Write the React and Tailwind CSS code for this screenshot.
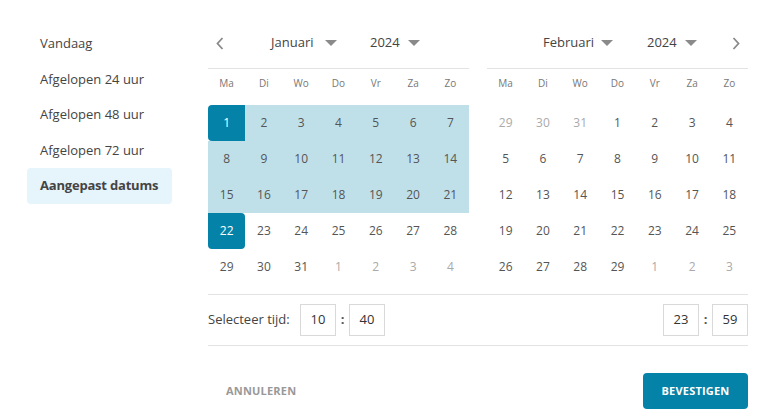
import { useState } from 'react';

const jan = [
  [1, 2, 3, 4, 5, 6, 7],
  [8, 9, 10, 11, 12, 13, 14],
  [15, 16, 17, 18, 19, 20, 21],
  [22, 23, 24, 25, 26, 27, 28],
  [29, 30, 31, '1*', '2*', '3*', '4*'],
];

const feb = [
  ['29*', '30*', '31*', 1, 2, 3, 4],
  [5, 6, 7, 8, 9, 10, 11],
  [12, 13, 14, 15, 16, 17, 18],
  [19, 20, 21, 22, 23, 24, 25],
  [26, 27, 28, 29, '1*', '2*', '3*'],
];

const DAYS = ['Ma', 'Di', 'Wo', 'Do', 'Vr', 'Za', 'Zo'];

function Caret() {
  return (
    <svg width="12" height="6" viewBox="0 0 12 6">
      <path d="M0 0 L12 0 L6 6 Z" fill="#8a8a8a" />
    </svg>
  );
}

function Chevron({ dir }) {
  return (
    <svg width="8" height="13" viewBox="0 0 8 13">
      <polyline
        points={dir === 'left' ? '6.5,1 1.5,6.5 6.5,12' : '1.5,1 6.5,6.5 1.5,12'}
        fill="none" stroke="#8a8a8a" strokeWidth="1.8"
      />
    </svg>
  );
}

function Day({ v, inRange }) {
  const muted = typeof v === 'string';
  const label = muted ? v.replace('*', '') : v;
  const isStart = inRange && v === 1;
  const isEnd = inRange && v === 22;
  const ranged = inRange && typeof v === 'number' && v > 1 && v < 22;

  let cls = 'h-9 flex items-center justify-center text-[12px] ';
  if (isStart) cls += 'bg-[#0582a8] text-white rounded-l-[4px]';
  else if (isEnd) cls += 'bg-[#0582a8] text-white rounded-[4px] rounded-tl-none';
  else if (ranged) cls += 'bg-[#bfe0e9] text-[#555]';
  else if (muted) cls += 'text-[#aaa]';
  else cls += 'text-[#555]';

  return <div className={cls}>{label}</div>;
}

function Month({ rows, inRange, header }) {
  return (
    <div className="w-[261px]">
      <div className="h-[34px] flex items-center">{header}</div>
      <div className="mt-[8px] h-px bg-[#e3e3e3]" />
      <div className="grid grid-cols-7 h-9 pt-[7px]">
        {DAYS.map(d => (
          <div key={d} className="text-center text-[10px] leading-[14px] text-[#777]">{d}</div>
        ))}
      </div>
      <div className="grid grid-cols-7">
        {rows.flat().map((v, i) => <Day key={i} v={v} inRange={inRange} />)}
      </div>
    </div>
  );
}

function TimeBox({ value }) {
  return (
    <div className="w-9 h-8 border border-[#d9d9d9] flex items-center justify-center text-[13px] text-[#333]">
      {value}
    </div>
  );
}

function TimePair({ h, m }) {
  return (
    <div className="flex items-center">
      <TimeBox value={h} />
      <span className="w-[13px] text-center text-[13px] font-bold text-[#555]">:</span>
      <TimeBox value={m} />
    </div>
  );
}

export default function App() {
  const [active, setActive] = useState(4);
  const items = ['Vandaag', 'Afgelopen 24 uur', 'Afgelopen 48 uur', 'Afgelopen 72 uur', 'Aangepast datums'];

  return (
    <div className="w-[761px] h-[418px] bg-white flex pt-[26px]" style={{ fontFamily: '"Open Sans", sans-serif' }}>
      {/* presets */}
      <div className="ml-[27px] w-[145px] shrink-0">
        {items.map((it, i) => (
          <div key={it} onClick={() => setActive(i)}
            className={`h-[35.5px] px-[13px] flex items-center whitespace-nowrap text-[13px] text-[#444] rounded-[4px]
              ${active === i ? 'bg-[#e6f4fc] font-bold tracking-[-0.2px]' : ''}`}>
            {it}
          </div>
        ))}
      </div>

      <div className="ml-[36px] w-[540px]">
        <div className="flex gap-[18px]">
          <Month rows={jan} inRange header={
            <>
              <div className="w-6 flex justify-center"><Chevron dir="left" /></div>
              <div className="ml-[39px] w-[66px] flex items-center justify-between text-[13px] text-[#444]">
                <span>Januari</span><Caret />
              </div>
              <div className="ml-[33px] w-[50px] flex items-center justify-between text-[13px] text-[#444]">
                <span>2024</span><Caret />
              </div>
            </>
          } />
          <Month rows={feb} header={
            <>
              <div className="ml-[56px] w-[70px] flex items-center justify-between text-[13px] text-[#444]">
                <span>Februari</span><Caret />
              </div>
              <div className="ml-[34px] w-[50px] flex items-center justify-between text-[13px] text-[#444]">
                <span>2024</span><Caret />
              </div>
              <div className="ml-auto w-6 flex justify-center"><Chevron dir="right" /></div>
            </>
          } />
        </div>

        <div className="mt-[9px] h-px bg-[#e3e3e3]" />
        <div className="h-[50px] flex items-center">
          <span className="w-[92px] text-[13px] text-[#444]">Selecteer tijd:</span>
          <TimePair h="10" m="40" />
          <div className="ml-auto">
            <TimePair h="23" m="59" />
          </div>
        </div>
        <div className="h-px bg-[#e3e3e3]" />

        <div className="mt-[27px] flex items-center justify-between">
          <button className="ml-[18px] text-[11px] font-bold text-[#999] tracking-[0.2px]">ANNULEREN</button>
          <button className="w-[105px] h-9 rounded-[4px] bg-[#0582a8] text-white text-[11px] font-bold tracking-[0.2px]">
            BEVESTIGEN
          </button>
        </div>
      </div>
    </div>
  );
}
